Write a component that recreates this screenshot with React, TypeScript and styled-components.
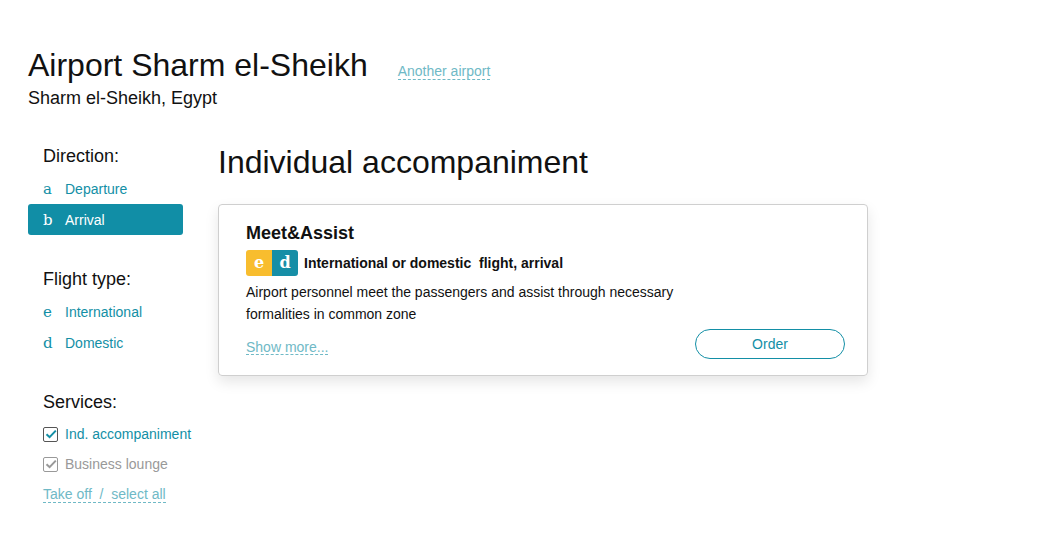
import React from "react";
import styled, { createGlobalStyle } from "styled-components";

const Global = createGlobalStyle`
  html, body { margin: 0; padding: 0; background: #fff; }
  body { font-family: "Liberation Sans", Arial, sans-serif; color: #111; }
`;

const TEAL = "#138fa6";
const LIGHT = "#6fb9c6";

const Page = styled.div`
  padding: 46px 0 0 28px;
`;

const Header = styled.div`
  display: flex;
  align-items: baseline;
`;

const Title = styled.h1`
  margin: 0;
  font-size: 32px;
  font-weight: 400;
  line-height: 38px;
`;

const DashedLink = styled.a<{ $size?: number }>`
  color: ${LIGHT};
  font-size: ${(p) => p.$size ?? 14}px;
  text-decoration: none;
  border-bottom: 1px dashed ${LIGHT};
  line-height: 1.05;
  cursor: pointer;
`;

const HeaderLink = styled(DashedLink)`
  margin-left: 30px;
`;

const Subtitle = styled.div`
  font-size: 18px;
  line-height: 22px;
  margin-top: 3px;
`;

const Body = styled.div`
  display: flex;
  margin-top: 35px;
`;

const Sidebar = styled.div`
  width: 190px;
  flex: none;
  display: flex;
  flex-direction: column;
`;

const Group = styled.div`
  display: flex;
  flex-direction: column;
  margin-bottom: 32px;
`;

const GroupTitle = styled.div`
  font-size: 18px;
  line-height: 24px;
  padding-left: 15px;
  margin-bottom: 5px;
`;

const Option = styled.div<{ $active?: boolean }>`
  display: flex;
  align-items: center;
  width: 155px;
  box-sizing: border-box;
  height: 31px;
  padding-left: 15px;
  border-radius: 3px;
  font-size: 14px;
  color: ${(p) => (p.$active ? "#fff" : TEAL)};
  background: ${(p) => (p.$active ? "#118ea6" : "transparent")};
`;

const Glyph = styled.span`
  font-family: "DejaVu Serif", "Liberation Serif", serif;
  font-size: 15px;
  width: 22px;
  flex: none;
`;

const Check = styled.div<{ $muted?: boolean }>`
  display: flex;
  align-items: center;
  height: 30px;
  padding-left: 15px;
  font-size: 14px;
  color: ${(p) => (p.$muted ? "#999" : TEAL)};
`;

const Box = styled.span<{ $muted?: boolean }>`
  width: 15px;
  height: 15px;
  box-sizing: border-box;
  border: 1px solid ${(p) => (p.$muted ? "#999" : "#555")};
  border-radius: 2px;
  margin-right: 7px;
  display: flex;
  align-items: center;
  justify-content: center;
`;

const SelectAll = styled.div`
  padding-left: 15px;
  margin-top: 6px;
`;

const Main = styled.div`
  flex: none;
  width: 650px;
`;

const SectionTitle = styled.h2`
  margin: 0 0 24px;
  font-size: 32px;
  font-weight: 400;
  line-height: 36px;
`;

const Card = styled.div`
  border: 1px solid #cfcfcf;
  border-radius: 4px;
  box-shadow: 0 6px 14px rgba(0, 0, 0, 0.1);
  padding: 17px 22px 16px 27px;
  display: flex;
  flex-direction: column;
`;

const CardTitle = styled.div`
  font-size: 18px;
  font-weight: 700;
  line-height: 22px;
`;

const TagRow = styled.div`
  display: flex;
  align-items: center;
  margin-top: 6px;
`;

const Badges = styled.div`
  display: flex;
  border-radius: 3px;
  overflow: hidden;
  margin-right: 6px;
`;

const Badge = styled.span<{ $bg: string }>`
  width: 26px;
  height: 26px;
  background: ${(p) => p.$bg};
  color: #fff;
  font-family: "DejaVu Serif", "Liberation Serif", serif;
  font-size: 16px;
  font-weight: 700;
  display: flex;
  align-items: center;
  justify-content: center;
  line-height: 1;
`;

const TagText = styled.span`
  font-size: 14px;
  font-weight: 700;
`;

const Desc = styled.p`
  margin: 5px 0 0;
  font-size: 14px;
  line-height: 22px;
  width: 440px;
`;

const Footer = styled.div`
  display: flex;
  justify-content: space-between;
  align-items: center;
  margin-top: 4px;
`;

const ShowMore = styled(DashedLink)`
  margin-top: 7px;
`;

const OrderButton = styled.button`
  width: 150px;
  height: 30px;
  border: 1px solid ${TEAL};
  border-radius: 15px;
  background: #fff;
  color: ${TEAL};
  font-family: "Liberation Sans", Arial, sans-serif;
  font-size: 14px;
  cursor: pointer;
`;

const Tick = ({ color }: { color: string }) => (
  <svg width="12" height="10" viewBox="0 0 12 10">
    <path d="M1.5 5.2 L4.6 8.2 L10.8 1.6" fill="none" stroke={color} strokeWidth="2" />
  </svg>
);

export default function App() {
  return (
    <Page>
      <Global />
      <Header>
        <Title>Airport Sharm el-Sheikh</Title>
        <HeaderLink>Another airport</HeaderLink>
      </Header>
      <Subtitle>Sharm el-Sheikh, Egypt</Subtitle>
      <Body>
        <Sidebar>
          <Group>
            <GroupTitle>Direction:</GroupTitle>
            <Option>
              <Glyph>a</Glyph>Departure
            </Option>
            <Option $active>
              <Glyph>b</Glyph>Arrival
            </Option>
          </Group>
          <Group>
            <GroupTitle>Flight type:</GroupTitle>
            <Option>
              <Glyph>e</Glyph>International
            </Option>
            <Option>
              <Glyph>d</Glyph>Domestic
            </Option>
          </Group>
          <Group>
            <GroupTitle>Services:</GroupTitle>
            <Check>
              <Box>
                <Tick color={TEAL} />
              </Box>
              Ind. accompaniment
            </Check>
            <Check $muted>
              <Box $muted>
                <Tick color="#999" />
              </Box>
              Business lounge
            </Check>
            <SelectAll>
              <DashedLink>Take off&nbsp; /&nbsp; select all</DashedLink>
            </SelectAll>
          </Group>
        </Sidebar>
        <Main>
          <SectionTitle>Individual accompaniment</SectionTitle>
          <Card>
            <CardTitle>Meet&amp;Assist</CardTitle>
            <TagRow>
              <Badges>
                <Badge $bg="#f8bd2e">e</Badge>
                <Badge $bg="#168ea6">d</Badge>
              </Badges>
              <TagText>International or domestic&nbsp; flight, arrival</TagText>
            </TagRow>
            <Desc>
              Airport personnel meet the passengers and assist through necessary formalities in common zone
            </Desc>
            <Footer>
              <ShowMore>Show more...</ShowMore>
              <OrderButton>Order</OrderButton>
            </Footer>
          </Card>
        </Main>
      </Body>
    </Page>
  );
}
